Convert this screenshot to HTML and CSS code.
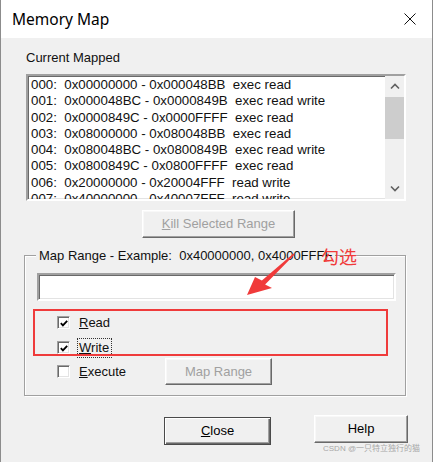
FILE: index.html
```html
<!DOCTYPE html>
<html>
<head>
<meta charset="utf-8">
<link rel="stylesheet" href="styles.css">
</head>
<body>
<div class="window">
  <div class="titlebar">
    <span class="title">Memory Map</span>
    <svg class="close-x" width="12" height="12" viewBox="0 0 12 12"><path d="M0.5 0.5 L11.5 11.5 M11.5 0.5 L0.5 11.5" stroke="#111" stroke-width="1" fill="none"/></svg>
  </div>
  <div class="client">
    <div class="label-current">Current Mapped</div>
    <div class="listbox">
      <div class="list-items">
        <div class="item">000:  0x00000000 - 0x000048BB  exec read</div>
        <div class="item">001:  0x000048BC - 0x0000849B  exec read write</div>
        <div class="item">002:  0x0000849C - 0x0000FFFF  exec read</div>
        <div class="item">003:  0x08000000 - 0x080048BB  exec read</div>
        <div class="item">004:  0x080048BC - 0x0800849B  exec read write</div>
        <div class="item">005:  0x0800849C - 0x0800FFFF  exec read</div>
        <div class="item">006:  0x20000000 - 0x20004FFF  read write</div>
        <div class="item">007:  0x40000000 - 0x40007FFF  read write</div>
      </div>
      <div class="scrollbar">
        <div class="sb-btn"><svg width="10" height="7" viewBox="0 0 10 7"><path d="M1 5.5 L5 1.5 L9 5.5" stroke="#606060" stroke-width="1.6" fill="none"/></svg></div>
        <div class="sb-track"><div class="sb-thumb"></div></div>
        <div class="sb-btn"><svg width="10" height="7" viewBox="0 0 10 7"><path d="M1 1.5 L5 5.5 L9 1.5" stroke="#606060" stroke-width="1.6" fill="none"/></svg></div>
      </div>
    </div>
    <div class="kill-row">
      <div class="btn disabled kill"><span><u>K</u>ill Selected Range</span></div>
    </div>
    <div class="group">
      <span class="group-label">Map Range - Example:  0x40000000, 0x4000FFFF</span>
      <div class="textbox"></div>
      <div class="check-row">
        <span class="checkbox"><svg width="11" height="11" viewBox="0 0 11 11"><path d="M2 5.2 L4.3 7.6 L9 2.6" stroke="#000" stroke-width="2" fill="none"/></svg></span>
        <span class="check-label"><u>R</u>ead</span>
      </div>
      <div class="check-row">
        <span class="checkbox"><svg width="11" height="11" viewBox="0 0 11 11"><path d="M2 5.2 L4.3 7.6 L9 2.6" stroke="#000" stroke-width="2" fill="none"/></svg></span>
        <span class="check-label focus"><u>W</u>rite</span>
      </div>
      <div class="check-row exec-row">
        <div class="exec-check">
          <span class="checkbox"></span>
          <span class="check-label"><u>E</u>xecute</span>
        </div>
        <div class="btn disabled maprange"><span>Map Range</span></div>
      </div>
    </div>
    <div class="bottom-row">
      <div class="btn default close-btn"><span><u>C</u>lose</span></div>
      <div class="btn help-btn"><span>Help</span></div>
    </div>
  </div>

  <div class="annot-rect"></div>
  <svg class="annot-arrow" width="60" height="55" viewBox="0 0 60 55"><polygon points="7,50 15,32 21.9,35.6 53.4,8.6 54.6,9.4 25.1,39.4 32,43" fill="#f03a3a"/></svg>
  <span class="annot-text">勾选</span>
  <span class="watermark">CSDN @一只特立独行的猫</span>
</div>
</body>
</html>
```
FILE: styles.css
```css
* { box-sizing: border-box; }
html, body { margin: 0; padding: 0; }
body {
  width: 433px;
  height: 462px;
  overflow: hidden;
  background: #f0f0f0;
  font-family: "Liberation Sans", Arial, sans-serif;
  font-size: 13px;
  color: #000;
}
.window {
  position: relative;
  width: 433px;
  height: 462px;
  border-left: 1px solid #8c8c8c;
  border-right: 1px solid #8c8c8c;
  background: #f0f0f0;
}
.titlebar {
  height: 38px;
  background: #fff;
  display: flex;
  align-items: center;
  padding-left: 11px;
  padding-right: 16px;
}
.title {
  font-family: "Noto Sans", "Open Sans", sans-serif;
  font-size: 15.5px;
  color: #000;
  flex: 1;
  padding-bottom: 1px;
}
.close-x { display: block; }

.client {
  display: flex;
  flex-direction: column;
  padding-top: 12px;
}
.label-current {
  margin-left: 25px;
  line-height: 16px;
  height: 16px;
  color: #111;
}
.listbox {
  margin-left: 25px;
  margin-top: 8px;
  width: 380px;
  height: 127px;
  background: #fff;
  border: 2px solid;
  border-color: #a0a0a0 #fff #fff #a0a0a0;
  box-shadow: inset 1px 1px 0 #696969, inset -1px -1px 0 #e3e3e3;
  display: flex;
  overflow: hidden;
}
.list-items {
  flex: 1;
  padding: 1px 0 0 3px;
  overflow: hidden;
}
.item {
  white-space: pre;
  font-size: 13.3px;
  line-height: 16.3px;
  height: 16.3px;
  color: #111;
}
.scrollbar {
  width: 19px;
  display: flex;
  flex-direction: column;
  background: #f0f0f0;
}
.sb-btn {
  height: 21px;
  display: flex;
  align-items: center;
  justify-content: center;
}
.sb-track {
  flex: 1;
  display: flex;
  flex-direction: column;
}
.sb-thumb {
  height: 42px;
  background: #cdcdcd;
}

.btn {
  display: flex;
  align-items: center;
  justify-content: center;
  background: #f0f0f0;
  border: 1px solid;
  border-color: #fff #696969 #696969 #fff;
  box-shadow: inset -1px -1px 0 #a0a0a0, inset 1px 1px 0 #f8f8f8;
  color: #000;
  line-height: 16px;
}
.btn.disabled { color: #a0a0a0; }
.btn.default {
  border: 1px solid #4a4a4a;
  box-shadow: inset 1px 1px 0 #fff, inset -1px -1px 0 #696969, inset -2px -2px 0 #a0a0a0;
}
.kill-row { display: flex; margin-top: 9px; }
.kill {
  margin-left: 141px;
  width: 153px;
  height: 28px;
}

.group {
  position: relative;
  margin-top: 17px;
  margin-left: 23px;
  width: 382px;
  border: 1px solid #a0a0a0;
  box-shadow: 1px 1px 0 #fff, inset 1px 1px 0 #fff;
  padding: 17px 0 10px 12px;
  display: flex;
  flex-direction: column;
}
.group-label {
  position: absolute;
  top: -8px;
  left: 11px;
  padding: 0 3px;
  background: #f0f0f0;
  line-height: 16px;
  white-space: pre;
  color: #111;
}
.textbox {
  width: 359px;
  height: 28px;
  background: #fff;
  border: 2px solid;
  border-color: #a0a0a0 #fff #fff #a0a0a0;
  box-shadow: inset 1px 1px 0 #696969, inset -1px -1px 0 #e3e3e3;
  margin-bottom: 9px;
}
.check-row {
  height: 25px;
  display: flex;
  align-items: center;
  padding-left: 20px;
}
.exec-row {
  height: 27px;
  margin-top: -2px;
}
.exec-check {
  display: flex;
  align-items: center;
  width: 108px;
}
.checkbox {
  width: 13px;
  height: 13px;
  background: #fff;
  border: 1px solid;
  border-color: #a0a0a0 #fff #fff #a0a0a0;
  box-shadow: inset 1px 1px 0 #696969, inset -1px -1px 0 #e3e3e3;
  display: flex;
  align-items: center;
  justify-content: center;
  flex: none;
}
.checkbox svg { display: block; margin: 1px 0 0 1px; }
.check-label {
  margin-left: 9px;
  line-height: 16px;
  color: #111;
}
.check-label.focus {
  outline: 1px dotted #333;
  outline-offset: 1px;
  padding: 0 1px 0 0;
}
.maprange {
  width: 107px;
  height: 27px;
}

.bottom-row {
  display: flex;
  align-items: flex-start;
  margin-top: 19px;
}
.close-btn {
  margin-left: 163px;
  margin-top: 2px;
  width: 107px;
  height: 28px;
}
.help-btn {
  margin-left: 43px;
  width: 94px;
  height: 28px;
}

.annot-rect {
  position: absolute;
  left: 32px;
  top: 309px;
  width: 355px;
  height: 47px;
  border: 2px solid #ef3b3b;
}
.annot-arrow {
  position: absolute;
  left: 239px;
  top: 245px;
}
.annot-text {
  position: absolute;
  left: 320px;
  top: 246px;
  font-family: "Noto Sans CJK SC", sans-serif;
  font-size: 18px;
  line-height: 20px;
  color: #f03a3a;
}
.watermark {
  position: absolute;
  left: 322px;
  top: 443px;
  font-family: "Liberation Sans", "Noto Sans CJK SC", sans-serif;
  font-size: 8px;
  line-height: 11px;
  color: #a8a8a8;
  white-space: nowrap;
}
```
